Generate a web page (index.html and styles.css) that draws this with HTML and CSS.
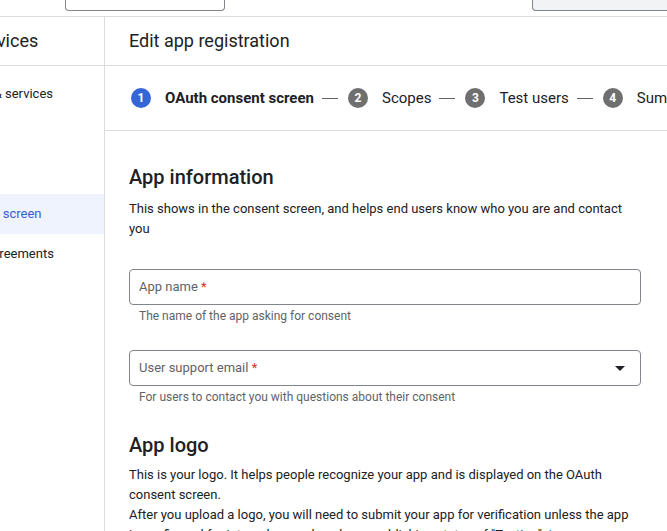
FILE: index.html
```html
<!DOCTYPE html>
<html lang="en">
<head>
<meta charset="utf-8">
<title>Edit app registration</title>
<link rel="stylesheet" href="styles.css">
</head>
<body>
<div class="topbar">
  <div class="search-box"></div>
  <div class="top-button"></div>
</div>
<div class="layout">
  <aside class="sidebar">
    <div class="sidebar-inner">
      <div class="sidebar-title">APIs &amp; Services</div>
      <nav class="nav">
        <div class="nav-item">Enabled APIs &amp; services</div>
        <div class="nav-item">Library</div>
        <div class="nav-item">Credentials</div>
        <div class="nav-item active">OAuth consent screen</div>
        <div class="nav-item">Page usage agreements</div>
      </nav>
    </div>
  </aside>
  <main class="main">
    <div class="main-title">Edit app registration</div>
    <div class="stepper">
      <div class="step current"><span class="step-num">1</span><span class="step-label">OAuth consent screen</span></div>
      <span class="step-dash"></span>
      <div class="step"><span class="step-num">2</span><span class="step-label">Scopes</span></div>
      <span class="step-dash"></span>
      <div class="step"><span class="step-num">3</span><span class="step-label">Test users</span></div>
      <span class="step-dash"></span>
      <div class="step"><span class="step-num">4</span><span class="step-label">Summary</span></div>
    </div>
    <div class="form">
      <h2 class="section-title">App information</h2>
      <p class="section-text">This shows in the consent screen, and helps end users know who you are and contact you</p>
      <div class="field first">
        <div class="field-box"><span class="placeholder">App name <span class="req">*</span></span></div>
        <div class="hint">The name of the app asking for consent</div>
      </div>
      <div class="field">
        <div class="field-box"><span class="placeholder">User support email <span class="req">*</span></span>
          <svg class="drop" width="10" height="5" viewBox="0 0 10 5"><path d="M0 0L5 5L10 0Z" fill="#202124"/></svg>
        </div>
        <div class="hint">For users to contact you with questions about their consent</div>
      </div>
      <h2 class="section-title logo-title">App logo</h2>
      <p class="section-text tight">This is your logo. It helps people recognize your app and is displayed on the OAuth consent screen.<br>After you upload a logo, you will need to submit your app for verification unless the app is configured for internal use only or has a publishing status of "Testing". <a class="link" href="#">Learn more</a></p>
    </div>
  </main>
</div>
</body>
</html>
```

FILE: styles.css
```css
* { box-sizing: border-box; }
html, body { margin: 0; padding: 0; }
body {
  width: 667px;
  height: 531px;
  overflow: hidden;
  font-family: Roboto, "Liberation Sans", Arial, sans-serif;
  color: #202124;
  background: #fff;
}
.topbar {
  height: 17px;
  border-bottom: 1px solid #dadce0;
  display: flex;
  align-items: flex-start;
}
.search-box {
  margin-left: 65px;
  width: 160px;
  height: 11px;
  border: 1px solid #80868b;
  border-top: none;
  border-radius: 0 0 4px 4px;
  background: #fff;
}
.top-button {
  margin-left: auto;
  width: 135px;
  height: 11px;
  border: 1px solid #80868b;
  border-top: none;
  border-right: none;
  border-radius: 0 0 0 4px;
  background: #f1f3f4;
}
.layout {
  display: flex;
  height: 514px;
}
.sidebar {
  width: 105px;
  flex: none;
  border-right: 1px solid #dadce0;
  overflow: hidden;
}
.sidebar-inner {
  width: 256px;
  margin-left: -152px;
}
.sidebar-title {
  height: 49px;
  border-bottom: 1px solid #dadce0;
  font-size: 18px;
  line-height: 47px;
  padding-left: 65px;
  white-space: nowrap;
}
.nav { padding-top: 8px; }
.nav-item {
  height: 40px;
  line-height: 40px;
  font-size: 13px;
  padding-left: 66px;
  white-space: nowrap;
}
.nav-item.active {
  background: #eef3fd;
  color: #3b5bd6;
}
.main {
  flex: 1;
  min-width: 0;
  overflow: hidden;
}
.main-title {
  height: 49px;
  border-bottom: 1px solid #dadce0;
  font-size: 18px;
  line-height: 47px;
  padding-left: 24px;
  white-space: nowrap;
}
.stepper {
  height: 65px;
  border-bottom: 1px solid #dadce0;
  display: flex;
  align-items: center;
  padding-left: 24px;
  white-space: nowrap;
}
.step {
  display: flex;
  align-items: center;
  flex: none;
}
.step-num {
  width: 20px;
  height: 20px;
  margin: 0 2px;
  border-radius: 50%;
  background: #6f6f6f;
  color: #fff;
  font-size: 12px;
  font-weight: 700;
  line-height: 20px;
  text-align: center;
}
.step.current .step-num { background: #3367d6; }
.step-label {
  margin-left: 12px;
  font-size: 15px;
}
.step.current .step-label { font-weight: 700; }
.step-dash {
  flex: none;
  width: 16px;
  height: 1px;
  margin: 0 8px;
  background: #5f6368;
}
.form {
  width: 536px;
  padding: 32px 0 0 24px;
}
.section-title {
  margin: 0;
  font-size: 20px;
  font-weight: 500;
  line-height: 28px;
}
.section-text {
  margin: 8px 0 0;
  font-size: 13px;
  line-height: 20px;
}
.field.first { margin-top: 30px; }
.field { margin-top: 26px; }
.field-box {
  height: 36px;
  border: 1px solid #80868b;
  border-radius: 4px;
  display: flex;
  align-items: center;
  padding: 0 15px 0 9px;
}
.placeholder {
  font-size: 13px;
  line-height: 16px;
  margin-top: -1px;
  color: #5f6368;
}
.req { color: #d93025; }
.drop { margin-left: auto; }
.hint {
  margin-top: 3px;
  padding-left: 10px;
  font-size: 12px;
  line-height: 16px;
  color: #5f6368;
}
.logo-title { margin-top: 26px; }
.tight { margin-top: 6px; }
.link { color: #1a73e8; text-decoration: none; }
```
